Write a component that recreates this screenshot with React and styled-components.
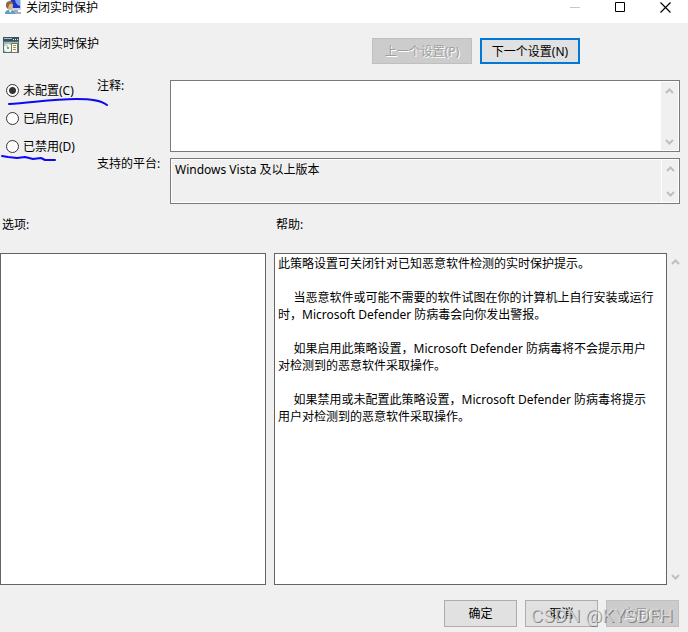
import React, { useState } from 'react';
import styled, { createGlobalStyle } from 'styled-components';

const SETTING_NAME = '关闭实时保护';

const STATES = [
    { value: 'none', label: '未配置(C)' },
    { value: 'enabled', label: '已启用(E)' },
    { value: 'disabled', label: '已禁用(D)' },
];

const HELP = [
    '此策略设置可关闭针对已知恶意软件检测的实时保护提示。',
    '     当恶意软件或可能不需要的软件试图在你的计算机上自行安装或运行时，Microsoft Defender 防病毒会向你发出警报。',
    '     如果启用此策略设置，Microsoft Defender 防病毒将不会提示用户对检测到的恶意软件采取操作。',
    '     如果禁用或未配置此策略设置，Microsoft Defender 防病毒将提示用户对检测到的恶意软件采取操作。',
];

const UserScreenIcon = () => (
    <svg width="17" height="16" viewBox="0 0 17 16" aria-hidden="true">
        <path d="M4 0h12v10H6z" fill="#c9d3e6" />
        <path d="M6 0h9v8H6z" fill="#1c35c8" />
        <path d="M10 0h5v6q-4-1-5-6z" fill="#7da2f2" />
        <path d="M9 10h4v2h3v2H8z" fill="#a3adbd" />
        <path d="M0 14q0-4 4-4h2q4 0 4 4z" fill="#5e9dc4" />
        <path d="M4 10l1 3 2-3z" fill="#eef4fa" />
        <ellipse cx="5" cy="6" rx="3" ry="4" fill="#e0b384" />
        <path d="M1 7q-1-6 4-6 3 0 3 3-3-1-4 1l-1 4z" fill="#8a6a45" />
    </svg>
);

const PolicyIcon = () => (
    <svg width="16" height="16" viewBox="0 0 16 16" aria-hidden="true">
        <rect x="0" y="0" width="16" height="16" fill="#4f7469" />
        <rect x="0" y="0" width="16" height="4" fill="#3c4f63" />
        <path d="M1 1.5h8" stroke="#a9bccb" />
        <path d="M10 2.5h1M12 2.5h1M14 2.5h1" stroke="#e8eef4" />
        <rect x="1" y="5" width="14" height="10" fill="#9fbdb2" />
        <circle cx="5" cy="11" r="4" fill="#f4f6f4" />
        <path d="M5 11L2 8h3z" fill="#bcd9b7" />
        <circle cx="5" cy="11" r="1" fill="#6d7772" />
        <path d="M8.500 6.500h6v9h-6z" fill="#fbf9e9" stroke="#6c7963" />
        <path d="M10 8.500h3M10 10.500h3M10 12.500h3" stroke="#a6935c" />
    </svg>
);

const Chevron = ({ down }) => (
    <svg width="9" height="8" viewBox="0 0 9 8" aria-hidden="true">
        <path d={down ? 'M1 2l3.500 3.500L8 2' : 'M1 6l3.500-3.500L8 6'} fill="none" stroke="#bfbfbf" strokeWidth="2" />
    </svg>
);

const ScrollBar = ({ lined }) => (
    <ScrollTrack $lined={lined}>
        <ScrollButton type="button" aria-label="向上滚动"><Chevron /></ScrollButton>
        <ScrollButton type="button" aria-label="向下滚动"><Chevron down /></ScrollButton>
    </ScrollTrack>
);

export default function App() {
    const [state, setState] = useState('none');
    const [comment, setComment] = useState('');

    return (
        <Window>
            <GlobalStyle />
            <TitleBar>
                <UserScreenIcon />
                <TitleText>{SETTING_NAME}</TitleText>
                <WindowButton type="button" aria-label="最小化" disabled>
                    <svg width="11" height="11"><path d="M0 5.500h10" stroke="#c8c8c8" /></svg>
                </WindowButton>
                <WindowButton type="button" aria-label="最大化">
                    <svg width="11" height="11"><path d="M.5 .5h9v9h-9z" fill="none" stroke="#000" /></svg>
                </WindowButton>
                <WindowButton type="button" aria-label="关闭">
                    <svg width="11" height="11"><path d="M.5 .5l10 10M10.500 .5l-10 10" stroke="#000" strokeWidth="1.2" /></svg>
                </WindowButton>
            </TitleBar>

            <Header>
                <SettingName>
                    <PolicyIcon />
                    {SETTING_NAME}
                </SettingName>
                <NavButtons>
                    <Button type="button" $wide disabled>上一个设置(P)</Button>
                    <Button type="button" $wide $primary>下一个设置(N)</Button>
                </NavButtons>
            </Header>

            <Settings>
                <States>
                    {STATES.map(item => (
                        <RadioLabel key={item.value}>
                            <Radio
                                name="state"
                                value={item.value}
                                checked={state === item.value}
                                onChange={event => setState(event.target.value)}
                            />
                            {item.label}
                        </RadioLabel>
                    ))}
                    <PenMarks viewBox="0 0 112 90" aria-hidden="true">
                        <path d="M9 24C30 23 52 19 76 19 91 19 101 20 107 25" />
                        <path d="M2 76L8 77 17 78 25 77 33 79 41 78 45 80 55 80" />
                    </PenMarks>
                </States>
                <Fields>
                    <FieldLabel htmlFor="comment">注释:</FieldLabel>
                    <FieldBox $height="72px" $white>
                        <TextArea id="comment" value={comment} onChange={event => setComment(event.target.value)} />
                        <ScrollBar />
                    </FieldBox>
                    <FieldLabel htmlFor="platform">支持的平台:</FieldLabel>
                    <FieldBox $height="46px">
                        <TextArea id="platform" readOnly value="Windows Vista 及以上版本" />
                        <ScrollBar lined />
                    </FieldBox>
                </Fields>
            </Settings>

            <Panels>
                <PanelTitle>选项:</PanelTitle>
                <PanelTitle>帮助:</PanelTitle>
                <Panel />
                <HelpArea>
                    <Panel>
                        {HELP.map(text => <Paragraph key={text}>{text}</Paragraph>)}
                    </Panel>
                    <ScrollBar />
                </HelpArea>
            </Panels>

            <Footer>
                <Button type="button">确定</Button>
                <Button type="button">取消</Button>
                <Button type="button" disabled>应用(A)</Button>
                <Watermark>CSDN @KYSDFH</Watermark>
            </Footer>
        </Window>
    );
}

const GlobalStyle = createGlobalStyle`
    * {
        box-sizing: border-box;
    }
    body {
        margin: 0;
        background-color: #f0f0f0;
    }
    body, button, textarea {
        font-family: "Noto Sans", "Noto Sans CJK SC", sans-serif;
        font-size: 12px;
        line-height: 17px;
        color: #000;
    }
    svg {
        display: block;
        flex: none;
    }
`;

const Window = styled.main`
    background-color: #f0f0f0;
    overflow: hidden;
`;

const TitleBar = styled.header`
    display: flex;
    align-items: flex-start;
    height: 23px;
    padding-left: 5px;
    background-color: #fff;
`;

const TitleText = styled.span`
    flex: 1;
    padding-left: 4px;
    line-height: 16px;
`;

const WindowButton = styled.button`
    display: flex;
    justify-content: center;
    width: 45px;
    height: 23px;
    padding: 2px 0 0;
    border: none;
    background: none;
`;

const Header = styled.div`
    display: flex;
    justify-content: space-between;
    padding: 15px 108px 0 3px;
`;

const SettingName = styled.h1`
    display: flex;
    align-items: flex-start;
    gap: 8px;
    margin: 0;
    font-size: 12px;
    font-weight: 400;
    line-height: 11px;

    svg {
        margin-top: -1px;
    }
`;

const NavButtons = styled.div`
    display: flex;
    gap: 8px;
`;

const Button = styled.button`
    width: ${props => props.$wide ? '100px' : '73px'};
    height: ${props => props.$wide ? '26px' : '27px'};
    padding: 0;
    border: ${props => props.$primary ? '2px solid #0078d7' : '1px solid #adadad'};
    background-color: #e1e1e1;

    &:disabled {
        border-color: #bfbfbf;
        background-color: #ccc;
        color: #a0a0a0;
        text-shadow: 1px 1px 0 #fff;
    }
`;

const Settings = styled.section`
    display: flex;
    padding: 16px 8px 0 0;
`;

const States = styled.div`
    position: relative;
    display: flex;
    flex-direction: column;
    gap: 11px;
    width: 97px;
    padding: 2px 0 0 6px;
`;

const RadioLabel = styled.label`
    display: flex;
    align-items: center;
    gap: 4px;
`;

const Radio = styled.input.attrs({ type: 'radio' })`
    appearance: none;
    width: 13px;
    height: 13px;
    margin: 0;
    border: 1px solid #333;
    border-radius: 50%;
    background-color: #fff;

    &:checked {
        background-image: radial-gradient(circle, #333 3px, #fff 4px);
    }
`;

const PenMarks = styled.svg`
    position: absolute;
    top: 0;
    left: 0;
    width: 112px;
    height: 90px;
    pointer-events: none;

    path {
        fill: none;
        stroke: #0a0af5;
        stroke-width: 2;
        stroke-linecap: round;
        stroke-linejoin: round;
    }
`;

const Fields = styled.div`
    flex: 1;
    display: grid;
    grid-template-columns: 73px 1fr;
    row-gap: 6px;
`;

const FieldLabel = styled.label`
    line-height: 12px;
`;

const FieldBox = styled.div`
    display: flex;
    height: ${props => props.$height};
    padding: 1px;
    border: 1px solid #7a7a7a;
    background-color: ${props => props.$white ? '#fff' : '#f0f0f0'};
    box-shadow: inset 0 0 0 1px #fff;
`;

const TextArea = styled.textarea`
    flex: 1;
    min-width: 0;
    padding: 1px 3px;
    border: none;
    outline: none;
    resize: none;
    overflow: hidden;
    background: transparent;
`;

const ScrollTrack = styled.div`
    display: flex;
    flex-direction: column;
    justify-content: space-between;
    flex: none;
    width: 17px;
    border-left: ${props => props.$lined ? '1px solid #fff' : 'none'};
    background-color: #f0f0f0;
`;

const ScrollButton = styled.button`
    display: flex;
    align-items: center;
    justify-content: center;
    height: 17px;
    padding: 0;
    border: none;
    background: none;
`;

const Panels = styled.section`
    display: grid;
    grid-template-columns: 266fr 410fr;
    column-gap: 8px;
    padding: 12px 4px 0 0;
`;

const PanelTitle = styled.h2`
    margin: 0;
    padding: 0 2px 20px;
    font-size: 12px;
    font-weight: 400;
    line-height: 17px;
`;

const Panel = styled.div`
    flex: 1;
    min-height: 332px;
    padding: 1px 10px 1px 3px;
    border: 1px solid #646464;
    background-color: #fff;
`;

const HelpArea = styled.div`
    display: flex;
`;

const Paragraph = styled.p`
    margin: 0 0 17px;
    white-space: pre-wrap;
`;

const Footer = styled.footer`
    position: relative;
    display: flex;
    justify-content: flex-end;
    gap: 8px;
    padding: 15px 9px 5px 0;
`;

const Watermark = styled.span`
    position: absolute;
    right: 15px;
    bottom: 4px;
    font-family: Roboto, "Liberation Sans", sans-serif;
    font-size: 19px;
    line-height: 24px;
    color: rgba(222, 222, 222, 0.8);
    text-shadow: 1px 1px 0 rgba(110, 110, 110, 0.8);
    pointer-events: none;
`;
